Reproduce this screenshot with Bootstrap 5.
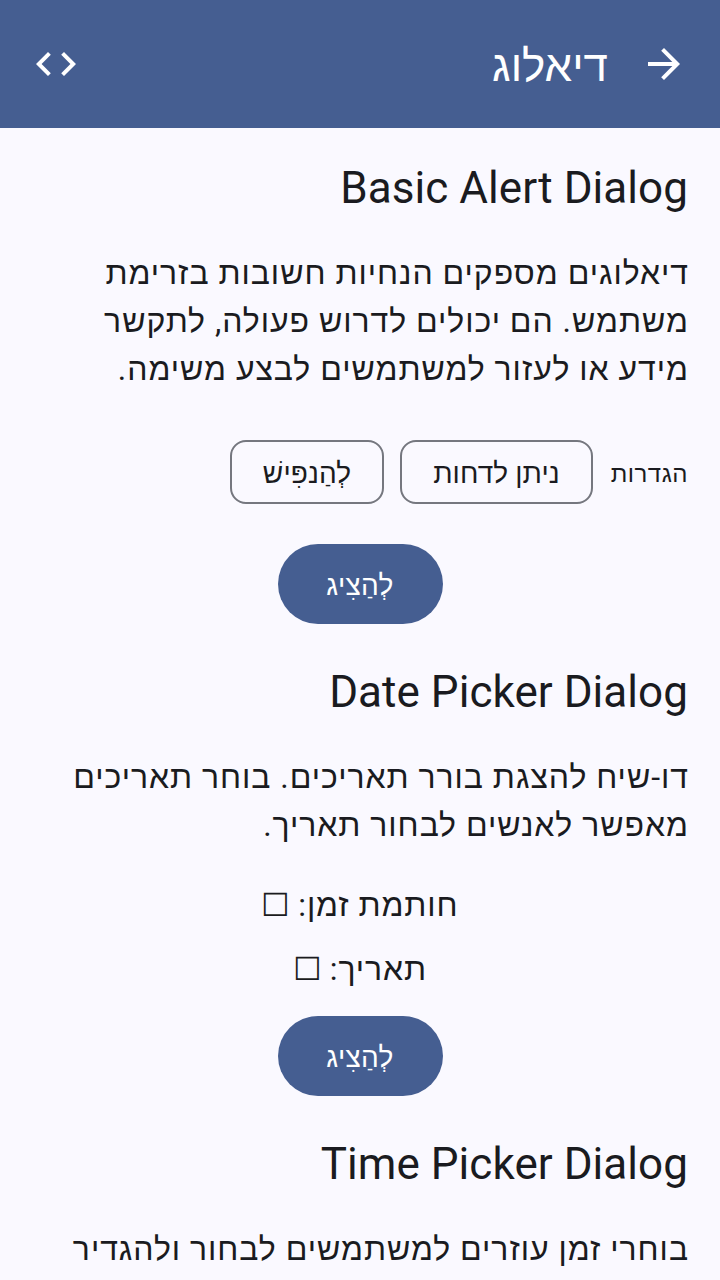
<!DOCTYPE html>
<html lang="he" dir="rtl">
<head>
<meta charset="utf-8">
<meta name="viewport" content="width=device-width, initial-scale=1">
<title>דיאלוג</title>
<link href="https://cdn.jsdelivr.net/npm/bootstrap@5.3.0/dist/css/bootstrap.min.css" rel="stylesheet">
<style>
body{background:#faf9ff;color:#1a1b20;font-family:Roboto,"Liberation Sans","Noto Sans",sans-serif;height:1280px;overflow:hidden}
.topbar{height:128px;background:#455e91;color:#fff;padding:0 32px}
.topbar h1{font-size:44px;line-height:56px;font-weight:400;letter-spacing:0;padding-top:4px;margin:0 32px}
.page-body{padding:32px 32px 0}
.headline{font-size:44px;line-height:56px;font-weight:400;letter-spacing:.05px;margin:0 0 32px}
.copy{font-size:32px;line-height:48px;letter-spacing:.96px;white-space:nowrap;margin:1px -1px -1px 0}
.chip-row{margin-top:48px}
.chip,.chip:hover{height:64px;border:2px solid #75777f;border-radius:16px;font-size:28px;letter-spacing:.1px;color:#1a1b20;padding:3px 0 0;white-space:nowrap}
.chip-wide{width:193px}
.chip-narrow{width:154px}
.show-btn,.show-btn:hover{width:165px;height:80px;border:0;border-radius:40px;background:#455e91;color:#fff;font-size:28px;letter-spacing:.3px;padding:3px 0 0;margin:40px 0}
.dates .show-btn{margin-top:16px}
.caption-label{font-size:24px;letter-spacing:.5px;width:79px;padding-top:3px;white-space:nowrap}
.status{height:64px;line-height:66px;font-size:32px;letter-spacing:.9px}
.status span{margin-right:-2px}
</style>
</head>
<body>
<header class="topbar d-flex align-items-center">
<svg width="48" height="48" viewBox="0 0 24 24" fill="#fff"><path d="M12 4l-1.41 1.41L16.17 11H4v2h12.17l-5.58 5.59L12 20l8-8z"/></svg>
<h1>דיאלוג</h1>
<svg class="me-auto" width="48" height="48" viewBox="0 0 24 24" fill="#fff"><path d="M9.4 16.6L4.8 12l4.6-4.6L8 6l-6 6 6 6 1.4-1.4zm5.2 0l4.6-4.6-4.6-4.6L16 6l6 6-6 6-1.4-1.4z"/></svg>
</header>
<main class="page-body d-flex flex-column">
<section class="d-flex flex-column">
<h2 class="headline">Basic Alert Dialog</h2>
<p class="copy">דיאלוגים מספקים הנחיות חשובות בזרימת<br>משתמש. הם יכולים לדרוש פעולה, לתקשר<br>מידע או לעזור למשתמשים לבצע משימה.</p>
<div class="chip-row d-flex align-items-center gap-3"><span class="caption-label">הגדרות</span><button class="btn chip chip-wide">ניתן לדחות</button><button class="btn chip chip-narrow">לְהַנפִּישׁ</button></div>
<button class="btn show-btn align-self-center">לְהַצִיג</button>
</section>
<section class="dates d-flex flex-column">
<h2 class="headline">Date Picker Dialog</h2>
<p class="copy">דו-שיח להצגת בורר תאריכים. בוחר תאריכים<br>מאפשר לאנשים לבחור תאריך.</p>
<div class="status text-center mt-4">חותמת זמן: <span>☐</span></div>
<div class="status text-center">תאריך: <span>☐</span></div>
<button class="btn show-btn align-self-center">לְהַצִיג</button>
</section>
<section class="d-flex flex-column">
<h2 class="headline">Time Picker Dialog</h2>
<p class="copy">בוחרי זמן עוזרים למשתמשים לבחור ולהגדיר</p>
</section>
</main>
<script src="https://cdn.jsdelivr.net/npm/bootstrap@5.3.0/dist/js/bootstrap.bundle.min.js"></script>
</body>
</html>
